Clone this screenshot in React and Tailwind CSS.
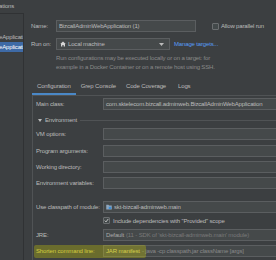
import { useState } from 'react'

const font = { fontFamily: '"Liberation Sans", Arial, sans-serif' }

function Box({ className = '', children }) {
  return (
    <div className={`h-[12px] bg-[#45494a] border border-[#5b5e60] flex items-center pl-[2px] overflow-hidden whitespace-nowrap ${className}`}>
      {children}
    </div>
  )
}

function Row({ label, children, className = '', labelClass = 'text-[#bbbbbb]' }) {
  return (
    <div className={`flex items-center ${className}`}>
      <div className={`w-[67px] shrink-0 whitespace-nowrap ${labelClass}`}>{label}</div>
      <div className="flex-1 min-w-0">{children}</div>
    </div>
  )
}

function CheckBox({ checked }) {
  return (
    <div className="w-[7px] h-[7px] shrink-0 border border-[#6b6e70] bg-[#43494a] rounded-[1px] flex items-center justify-center">
      {checked && (
        <svg width="5" height="5" viewBox="0 0 10 10">
          <path d="M1.5 5.2 L4 7.8 L8.6 1.8" fill="none" stroke="#d0d0d0" strokeWidth="1.8" />
        </svg>
      )}
    </div>
  )
}

function App() {
  const [tab, setTab] = useState('Configuration')
  const tabs = ['Configuration', 'Grep Console', 'Code Coverage', 'Logs']

  return (
    <div
      className="w-[276px] h-[260px] bg-[#3c3f41] overflow-hidden flex text-[6px] leading-[8px] tracking-[-0.15px] text-[#bbbbbb] relative"
      style={font}
    >
      {/* Left tree */}
      <div className="w-[24px] shrink-0 flex flex-col">
        <div className="h-[13px] leading-[13px] whitespace-nowrap overflow-hidden -ml-[1px]">ations</div>
        <div className="flex-1 border-t border-r border-[#303234] pt-[18px] overflow-hidden">
          <div className="h-[10px] flex items-center whitespace-nowrap -ml-[1px]">eApplicati</div>
          <div className="h-[10px] flex items-center whitespace-nowrap bg-[#3e6aa6] text-white pl-0">
            <span className="-ml-[1px]">eApplicati</span>
          </div>
        </div>
      </div>

      {/* Right side */}
      <div className="w-[270px] shrink-0 pt-[20px] pl-[7px] flex flex-col">
        <div className="flex items-center h-[12px]">
          <div className="w-[25px] shrink-0">Name:</div>
          <Box className="w-[140px] shrink-0">BizcallAdminWebApplication (1)</Box>
          <div className="ml-[16px] flex items-center gap-[2px]">
            <CheckBox />
            <span className="whitespace-nowrap">Allow parallel run</span>
          </div>
        </div>

        <div className="flex items-center h-[12px] mt-[6px]">
          <div className="w-[25px] shrink-0">Run on:</div>
          <Box className="w-[114px] shrink-0 justify-between pr-[5px]">
            <div className="flex items-center gap-[2px] pl-[1px]">
              <svg width="6" height="6" viewBox="0 0 12 12">
                <path d="M6 1 L11.5 6 L10 6 L10 11 L7.3 11 L7.3 7.8 L4.7 7.8 L4.7 11 L2 11 L2 6 L0.5 6 Z" fill="#d6d6d6" />
              </svg>
              <span>Local machine</span>
            </div>
            <svg width="5" height="3" viewBox="0 0 10 6">
              <path d="M0 0 L10 0 L5 6 Z" fill="#bbbbbb" />
            </svg>
          </Box>
          <span className="ml-[4px] text-[#589df6] whitespace-nowrap">Manage targets...</span>
        </div>

        <div className="mt-[4px] ml-[25px] text-[#8a8a8a] leading-[9px] whitespace-nowrap">
          <div>Run configurations may be executed locally or on a target: for</div>
          <div>example in a Docker Container or on a remote host using SSH.</div>
        </div>

        {/* Tabs */}
        <div className="mt-[8px] ml-[1px] flex h-[15px]">
          {tabs.map((t) => (
            <button
              key={t}
              onClick={() => setTab(t)}
              className={`px-[5px] h-[15px] pb-[2px] border-b-2 whitespace-nowrap ${
                tab === t ? 'border-[#4a88c7]' : 'border-transparent'
              } ${t === 'Logs' ? 'ml-[2px]' : ''}`}
            >
              {t}
            </button>
          ))}
        </div>

        {/* Panel */}
        <div className="ml-[1px] flex-1 border-l border-t border-[#505355] pl-[3px] flex flex-col">
          <Row label="Main class:" className="mt-[2px]">
            <Box>com.sktelecom.bizcall.adminweb.BizcallAdminWebApplication</Box>
          </Row>

          <div className="mt-[5px] h-[10px] flex items-center pl-[2px]">
            <div className="w-0 h-0 border-l-[2.5px] border-r-[2.5px] border-t-[3px] border-l-transparent border-r-transparent border-t-[#bbbbbb]" />
            <span className="ml-[3px] whitespace-nowrap">Environment</span>
            <div className="ml-[3px] flex-1 h-px bg-[#505355]" />
          </div>

          <Row label="VM options:" className="mt-[3px]">
            <Box />
          </Row>
          <Row label="Program arguments:" className="mt-[5px]">
            <Box />
          </Row>
          <Row label="Working directory:" className="mt-[4px]">
            <Box />
          </Row>
          <Row label="Environment variables:" className="mt-[4px]">
            <Box />
          </Row>

          <Row label="Use classpath of module:" className="mt-[12px]">
            <Box className="gap-[2px]">
              <svg width="6" height="6" viewBox="0 0 12 12">
                <path d="M0.5 1.5 H5 L6 3 H11.5 V11 H0.5 Z" fill="#8fa6bd" />
                <rect x="5.5" y="5.5" width="5" height="4.5" fill="#3d8fd6" />
              </svg>
              <span>skt-bizcall-adminweb.main</span>
            </Box>
          </Row>

          <div className="mt-[3px] h-[9px] flex items-center pl-[67px] gap-[3px]">
            <CheckBox checked />
            <span className="whitespace-nowrap">Include dependencies with "Provided" scope</span>
          </div>

          <Row label="JRE:" className="mt-[4px]">
            <Box className="border-[#4d5052]">
              <span className="text-[#a9a9a9]">Default</span>
              <span className="ml-[2px] text-[#7a7a7a]">(11 - SDK of 'skt-bizcall-adminweb.main' module)</span>
            </Box>
          </Row>

          <Row label="Shorten command line:" className="mt-[4px]" labelClass="text-[#cfc95a]">
            <Box>
              <span className="text-[#d2cd6a]">JAR manifest</span>
              <span className="ml-[2px] text-[#8a8a8a]">- java -cp classpath.jar className [args]</span>
            </Box>
          </Row>
        </div>
      </div>

      {/* Yellow highlighter mark */}
      <div className="absolute left-[34px] top-[245px] w-[112px] h-[13px] bg-[#d8d400]/30 rounded-[2px] pointer-events-none" />
    </div>
  )
}

export default App
